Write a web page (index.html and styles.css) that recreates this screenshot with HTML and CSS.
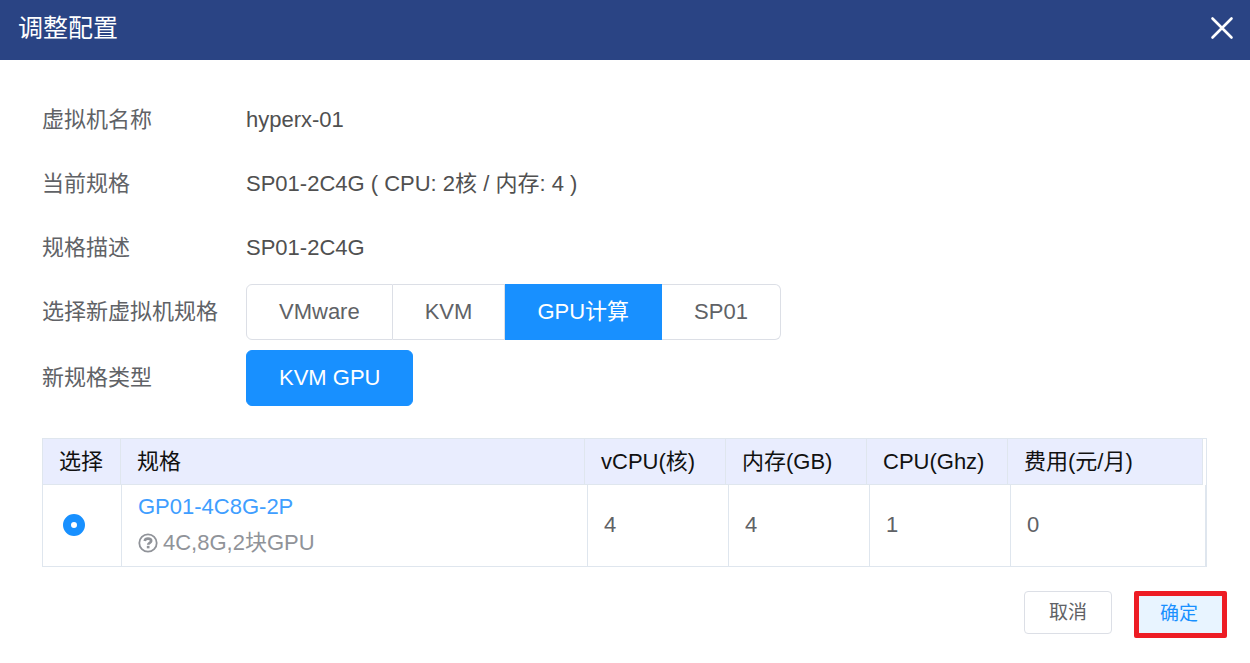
FILE: index.html
```html
<!DOCTYPE html>
<html lang="zh-CN">
<head>
<meta charset="utf-8">
<title>调整配置</title>
<link rel="stylesheet" href="styles.css">
</head>
<body>
<form class="dialog">
  <header class="dialog-header">
    <h1 class="dialog-title">调整配置</h1>
    <button class="close" type="button" aria-label="关闭">
      <svg width="24" height="24" viewBox="0 0 24 24" fill="none" stroke="currentColor" stroke-width="2.6" stroke-linecap="round"><path d="M2.5 2.5l19 19M21.5 2.5l-19 19"/></svg>
    </button>
  </header>

  <main class="content">
    <div class="row">
      <span class="label">虚拟机名称</span>
      <span class="value">hyperx-01</span>
    </div>
    <div class="row">
      <span class="label">当前规格</span>
      <span class="value">SP01-2C4G ( CPU: 2核 / 内存: 4 )</span>
    </div>
    <div class="row">
      <span class="label">规格描述</span>
      <span class="value">SP01-2C4G</span>
    </div>
    <div class="row choice">
      <span class="label" id="family-label">选择新虚拟机规格</span>
      <div class="segments" role="radiogroup" aria-labelledby="family-label">
        <label class="segment"><input type="radio" name="family">VMware</label>
        <label class="segment"><input type="radio" name="family">KVM</label>
        <label class="segment"><input type="radio" name="family" checked>GPU计算</label>
        <label class="segment"><input type="radio" name="family">SP01</label>
      </div>
    </div>
    <div class="row choice">
      <span class="label" id="type-label">新规格类型</span>
      <div class="segments" role="radiogroup" aria-labelledby="type-label">
        <label class="segment"><input type="radio" name="type" checked>KVM GPU</label>
      </div>
    </div>

    <table class="specs">
      <thead>
        <tr><th>选择</th><th>规格</th><th>vCPU(核)</th><th>内存(GB)</th><th>CPU(Ghz)</th><th>费用(元/月)</th></tr>
      </thead>
      <tbody>
        <tr>
          <td><input class="pick" type="radio" name="spec" aria-label="GP01-4C8G-2P" checked></td>
          <td>
            <a class="spec-name" href="#">GP01-4C8G-2P</a>
            <span class="spec-note">
              <svg width="20" height="20" viewBox="0 0 20 20" fill="none" stroke="currentColor" aria-hidden="true"><circle cx="10" cy="10" r="8.7" stroke-width="1.8"/><path d="M6.7 8C7 6.3 8.2 5.6 10 5.6c1.9 0 3.2.8 3.2 2.3 0 1.9-3 1.9-3 3.8" stroke-width="2.6"/><path d="M8.8 14.1h2.7" stroke-width="2.5"/></svg>
              4C,8G,2块GPU
            </span>
          </td>
          <td>4</td><td>4</td><td>1</td><td>0</td>
        </tr>
      </tbody>
    </table>
  </main>

  <footer class="actions">
    <button class="button" type="button">取消</button>
    <button class="button confirm" type="submit">确定</button>
  </footer>
</form>
</body>
</html>
```
FILE: styles.css
```css
* {
  box-sizing: border-box;
}

body {
  margin: 0;
  background: #fff;
  color: #606266;
  font: 22px/32px "Liberation Sans", "Noto Sans CJK SC", sans-serif;
}

button {
  font-family: inherit;
  cursor: pointer;
}

.dialog-header {
  display: flex;
  align-items: center;
  justify-content: space-between;
  height: 60px;
  padding: 0 16px 4px 18px;
  background: #2a4484;
  color: #fff;
}

.dialog-title {
  margin: 0;
  font-size: 25px;
  font-weight: 400;
}

.close {
  display: flex;
  padding: 0;
  border: 0;
  background: none;
  color: inherit;
}

.content {
  padding: 28px 43px 0 42px;
}

.row {
  display: flex;
  align-items: center;
  min-height: 64px;
}

.choice {
  min-height: 56px;
  margin: 4px 0 10px;
}

.label {
  flex: 0 0 204px;
}

.value {
  color: #505050;
}

.segments {
  display: flex;
}

.segment {
  position: relative;
  padding: 11px 32px;
  border: 1px solid #dcdfe6;
  border-left-width: 0;
  cursor: pointer;
}

.segment:first-child {
  border-left-width: 1px;
  border-radius: 6px 0 0 6px;
}

.segment:last-child {
  border-radius: 0 6px 6px 0;
}

.segment:only-child {
  border-radius: 6px;
}

.segment input {
  position: absolute;
  inset: 0;
  margin: 0;
  opacity: 0;
}

.segment:has(input:checked) {
  border-color: #1890ff;
  background: #1890ff;
  color: #fff;
}

.specs {
  display: block;
  margin-top: 32px;
  border: 1px solid #dfe6ee;
}

.specs thead,
.specs tbody {
  display: block;
}

.specs thead {
  margin-right: 3px;
  background: #e9edfe;
  color: #111;
}

.specs tr {
  display: grid;
  grid-template-columns: 78px 1fr 141px 141px 141px 195px;
}

.specs tbody tr {
  grid-template-columns: 79px 1fr 141px 141px 141px 195px;
}

.specs th,
.specs td {
  padding: 0 16px;
  border-right: 1px solid #dfe6ee;
  text-align: left;
}

.specs th {
  padding: 7px 16px 6px;
  border-bottom: 1px solid #dfe6ee;
  font-weight: 400;
}

.specs td {
  display: flex;
  flex-direction: column;
  justify-content: center;
  min-height: 81px;
  padding-bottom: 2px;
}

.pick {
  appearance: none;
  width: 22px;
  height: 22px;
  margin: 0 4px;
  border: 8px solid #1890ff;
  border-radius: 50%;
  background: #fff;
}

.spec-name {
  line-height: 36px;
  color: #409eff;
  text-decoration: none;
}

.spec-note {
  display: flex;
  align-items: center;
  gap: 5px;
  line-height: 36px;
  color: #909399;
}

.actions {
  display: flex;
  align-items: flex-start;
  justify-content: flex-end;
  gap: 22px;
  padding: 24px 23px;
}

.button {
  padding: 8px 24px;
  border: 1px solid #dcdfe6;
  border-radius: 4px;
  background: #fff;
  color: #606266;
  font-size: 19px;
  line-height: 25px;
}

.confirm {
  padding: 5px 24px 7px 21px;
  border: 5px solid #ed1c24;
  border-radius: 2px;
  background: #e8f4ff;
  color: #1890ff;
}
```
